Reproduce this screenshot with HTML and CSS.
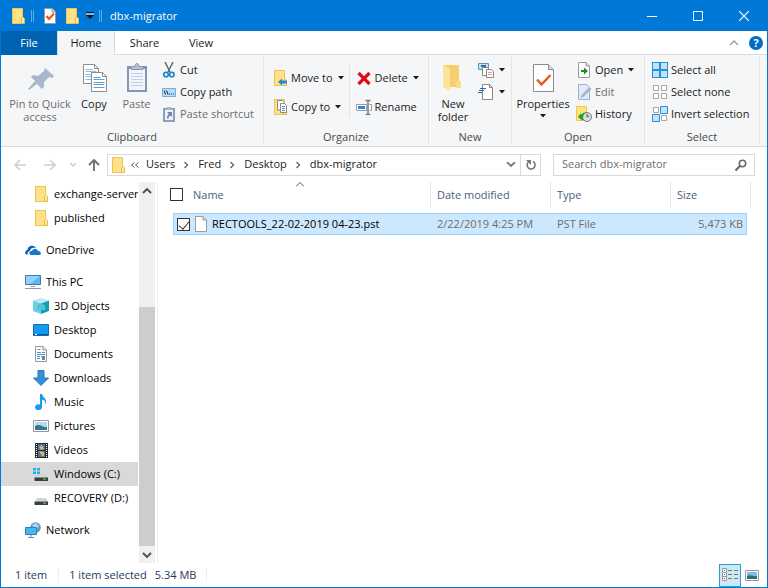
FILE: index.html
```
<!DOCTYPE html>
<html lang="en">
<head>
  <meta charset="UTF-8" />
  <meta name="viewport" content="width=device-width, initial-scale=1.0"/>
  <title>dbx-migrator</title>
  <link rel="stylesheet" href="styles.css">
</head>
<body>
  <!-- Shared icons -->
  <svg class="sprites" aria-hidden="true">
    <symbol id="i-folder" viewBox="0 0 16 16">
      <path d="M2.500 .5h10v10h1v5h-11z" fill="#ffe18a" stroke="#eec44f"/>
      <path d="M11.500 15.500v-5l1-1h1l1 1v5z" fill="#ffe9a6" stroke="#e5b93f"/>
    </symbol>
    <symbol id="i-page" viewBox="0 0 16 16">
      <path d="M2.500 .5h7.500l3.500 3.500v11.500h-11z" fill="#fff" stroke="#9a9a9a"/>
      <path d="M10 .5v3.500h3.500" fill="#ddd" stroke="#9a9a9a"/>
    </symbol>
    <symbol id="i-caret" viewBox="0 0 6 4"><path d="M0 0h6l-3 3.500z" fill="#1b1b1b"/></symbol>
    <symbol id="i-drive" viewBox="0 0 16 16">
      <path d="M4 8h9l2 3.500h-13z" fill="#d2d4d6"/>
      <path d="M1.500 11.500h13.500v3.500h-13.500z" fill="#3b3f41"/>
      <path d="M10.500 12.500h2v1.500h-2z" fill="#3ee43a"/>
    </symbol>
  </svg>

  <div class="window">
    <!-- Title bar -->
    <header class="titlebar">
      <div class="quick">
        <svg class="icon"><use href="#i-folder"/></svg>
        <span class="grip"></span>
        <button aria-label="Properties"><svg class="icon" viewBox="0 0 16 16"><use href="#i-page"/><path d="M4.500 8l2.500 3 5-5.500" fill="none" stroke="#e8501e" stroke-width="2"/></svg></button>
        <button aria-label="New folder"><svg class="icon"><use href="#i-folder"/></svg></button>
        <button class="customize" aria-label="Customize toolbar"><svg width="8" height="8" viewBox="0 0 8 8"><path d="M0 .5h8" stroke="#111"/><path d="M0 3h8l-4 4z" fill="#111"/><path d="M0 2h8" stroke="#fff"/></svg></button>
        <span class="grip"></span>
      </div>
      <h1>dbx-migrator</h1>
      <div class="controls">
        <button aria-label="Minimize"><svg width="10" height="10"><path d="M0 5.500h10" stroke="#fff"/></svg></button>
        <button aria-label="Maximize"><svg width="10" height="10"><path d="M.5 .5h9v9h-9z" fill="none" stroke="#fff"/></svg></button>
        <button aria-label="Close"><svg width="10" height="10"><path d="M0 0l10 10M10 0l-10 10" stroke="#fff" stroke-width="1.200"/></svg></button>
      </div>
    </header>

    <!-- Ribbon tabs -->
    <nav class="tabs">
      <button class="tab file">File</button>
      <button class="tab active">Home</button>
      <button class="tab">Share</button>
      <button class="tab view-tab">View</button>
      <button class="collapse" aria-label="Collapse ribbon"><svg width="8" height="6"><path d="M0 5l4-4 4 4" fill="none" stroke="#999" stroke-width="1.300"/></svg></button>
      <button class="help" aria-label="Help">?</button>
    </nav>

    <!-- Ribbon -->
    <div class="ribbon">
      <section class="group clipboard">
        <div class="tools">
          <button class="big pin" disabled>
            <svg width="32" height="32" viewBox="0 0 32 32"><path d="M21 6l9 8-2 2-3-1-5 5v5l-2 2-5-5-8 6-1-1 7-8-4-4 2-2 5 1 6-5z" fill="#a9b7cd"/></svg>
            Pin to Quick access
          </button>
          <button class="big copy">
            <svg width="32" height="32" viewBox="0 0 32 32">
              <path d="M5.500 2.500h11l4 4v15h-15z" fill="#fff" stroke="#8c8c8c"/><path d="M16.500 2.500v4h4" fill="none" stroke="#8c8c8c"/>
              <path d="M7.500 7.500h7M7.500 9.500h11M7.500 12.500h11M7.500 14.500h11M7.500 17.500h11" stroke="#8dbbea"/>
              <path d="M13.500 10.500h11l4 4v15h-15z" fill="#fff" stroke="#8c8c8c"/><path d="M24.500 10.500v4h4" fill="none" stroke="#8c8c8c"/>
              <path d="M15.500 15.500h7M15.500 17.500h11M15.500 20.500h11M15.500 22.500h11M15.500 25.500h11" stroke="#5e9fe0"/>
            </svg>
            Copy
          </button>
          <button class="big paste" disabled>
            <svg width="32" height="32" viewBox="0 0 32 32">
              <path d="M6 4h20v26h-20z" fill="#8396b8"/><path d="M8 7h16v21h-16z" fill="#f1f5fb"/>
              <path d="M10 11.500h12M10 14.500h12M10 17.500h12M10 20.500h12M10 23.500h12" stroke="#c5d0e2"/>
              <path d="M10 7.500v-3h4c0-4 4-4 4 0h4v3z" fill="#b5bfce" stroke="#8796ad"/>
            </svg>
            Paste
          </button>
          <div class="stack">
            <button class="small"><svg class="icon" viewBox="0 0 16 16"><path d="M4 0l5 10M12 0l-5 10" stroke="#5c6b78" stroke-width="1.500" fill="none"/><circle cx="5" cy="12.500" r="2.300" fill="none" stroke="#1583cb" stroke-width="1.600"/><circle cx="10.800" cy="12.500" r="2.300" fill="none" stroke="#1583cb" stroke-width="1.600"/></svg>Cut</button>
            <button class="small"><svg class="icon" viewBox="0 0 16 16"><path d="M1.500 4.500h13v8h-13z" fill="#b5e0fb" stroke="#79afd1"/><path d="M3 6.500l1.500 4M5.500 6.500l1.500 4" stroke="#123"/><path d="M8 10h1M10 10h1M12 10h1" stroke="#123"/></svg>Copy path</button>
            <button class="small" disabled><svg class="icon" viewBox="0 0 16 16"><path d="M2 2h12v14h-12z" fill="#8fa0bd"/><path d="M4 4h8v10h-8z" fill="#edf2f9"/><path d="M5.500 1h5v3h-5z" fill="#aab7cc"/><path d="M6 6h5v5l-1.500-1.500c-1.500 .5-2 1.500-2 3h-1.500c0-2.500 .5-3.500 2-4.500z" fill="#6c82a9"/></svg>Paste shortcut</button>
          </div>
        </div>
        <h2>Clipboard</h2>
      </section>

      <section class="group organize">
        <div class="tools">
          <div class="stack wide">
            <button class="small"><svg class="icon" viewBox="0 0 16 16"><use href="#i-folder"/><path d="M6 12l4-3.500v2h5v3h-5v2z" fill="#2a86d8"/></svg>Move to<svg class="caret"><use href="#i-caret"/></svg></button>
            <button class="small"><svg class="icon" viewBox="0 0 16 16"><use href="#i-folder"/><path d="M5.500 1.500h5l2 2v7.500h-7z" fill="#fff" stroke="#888"/><path d="M8.500 4.500h4l2 2v7h-6z" fill="#fff" stroke="#888"/><path d="M10 7.500h3M10 9.500h3M10 11.500h3" stroke="#4b94dd"/></svg>Copy to<svg class="caret"><use href="#i-caret"/></svg></button>
          </div>
          <div class="stack wide split">
            <button class="small"><svg class="icon" viewBox="0 0 16 16"><path d="M2.500 3l11 11M13.500 3l-11 11" stroke="#d8111b" stroke-width="3.200"/></svg>Delete<svg class="caret"><use href="#i-caret"/></svg></button>
            <button class="small"><svg class="icon" viewBox="0 0 16 16"><path d="M.5 5.500h10v6h-10zM13.500 5.500h2v6h-2" fill="#fff" stroke="#9a9a9a"/><path d="M2 7h7v3h-7z" fill="#2a86d8"/><path d="M9.500 1.500h5M9.500 15.500h5M12 1.500v14" stroke="#707c88" stroke-width="1.500" fill="none"/></svg>Rename</button>
          </div>
        </div>
        <h2>Organize</h2>
      </section>

      <section class="group new">
        <div class="tools">
          <button class="big newfolder">
            <svg width="32" height="32" viewBox="0 0 32 32"><path d="M6 3h16v22h-16z" fill="#f5d06d"/><path d="M19 19h5v7h-5z" fill="#f9dc89"/><path d="M6 3l7 4v22l-7-4z" fill="#fce49d"/></svg>
            New folder
          </button>
          <div class="stack">
            <button class="small" aria-label="New item"><svg class="icon" viewBox="0 0 16 16"><path d="M.5 1.500h10v6h-10z" fill="#bfe2f8" stroke="#5f93b5"/><path d="M3 4h5" stroke="#30729c" stroke-width="2"/><path d="M4.500 5.500h6v8h-6z" fill="#fff" stroke="#888"/><path d="M8.500 7.500h5l2 2v6h-7z" fill="#fff" stroke="#888"/><path d="M10 10.500h4M10 12.500h4" stroke="#df9b9b"/></svg><svg class="caret"><use href="#i-caret"/></svg></button>
            <button class="small" aria-label="Easy access"><svg class="icon" viewBox="0 0 16 16"><path d="M4.500 .5h7l3 3v12h-10z" fill="#fff" stroke="#888"/><path d="M11.500 .5v3h3" fill="none" stroke="#888"/><path d="M2 4.500h6M1 6.500h5M0 8.500h4" stroke="#1c6db4"/></svg><svg class="caret"><use href="#i-caret"/></svg></button>
          </div>
        </div>
        <h2>New</h2>
      </section>

      <section class="group open">
        <div class="tools">
          <button class="big properties">
            <svg width="32" height="32" viewBox="0 0 32 32"><path d="M6.500 2.500h15l5 5v22h-20z" fill="#fff" stroke="#8c8c8c"/><path d="M21.500 2.500v5h5" fill="#ddd" stroke="#8c8c8c"/><path d="M10 17.500l4.500 5 9-9.500" fill="none" stroke="#f0571e" stroke-width="2.500"/></svg>
            Properties
            <svg class="caret"><use href="#i-caret"/></svg>
          </button>
          <div class="stack">
            <button class="small"><svg class="icon" viewBox="0 0 16 16"><use href="#i-page"/><path d="M5 8h3V5.500L12 9l-4 3.500V10H5z" fill="#17901d"/></svg>Open<svg class="caret"><use href="#i-caret"/></svg></button>
            <button class="small" disabled><svg class="icon" viewBox="0 0 16 16"><path d="M2.500 .5h8l3 3v12h-11z" fill="#e1eaf8" stroke="#9db0d0"/><path d="M4.500 14l1-3 8-8 2 2-8 8z" fill="#a4b5d2"/></svg>Edit</button>
            <button class="small"><svg class="icon" viewBox="0 0 16 16"><path d="M.5 .5h10v14h-10z" fill="#ffe17b" stroke="#ecc755"/><circle cx="11" cy="11" r="4.500" fill="#d9dde0" stroke="#777"/><path d="M11 8v3l2-1" stroke="#555" fill="none"/><path d="M2 11l3-4v2c2-3 5-3 6-2-3 0-4 2-4 5v3z" fill="#18a52b"/></svg>History</button>
          </div>
        </div>
        <h2>Open</h2>
      </section>

      <section class="group select">
        <div class="tools">
          <div class="stack">
            <button class="small"><svg class="icon" viewBox="0 0 16 16"><path d="M0 0h16v16h-16z" fill="#2a8fd9"/><path d="M1 1h6v6h-6zM9 1h6v6h-6zM1 9h6v6h-6zM9 9h6v6h-6z" fill="#bfe4fb"/></svg>Select all</button>
            <button class="small"><svg class="icon" viewBox="0 0 16 16"><path d="M1.500 1.500h5v5h-5zM9.500 1.500h5v5h-5zM1.500 9.500h5v5h-5zM9.500 9.500h5v5h-5z" fill="#fff" stroke="#a5a5a5"/></svg>Select none</button>
            <button class="small"><svg class="icon" viewBox="0 0 16 16"><path d="M1.500 1.500h5v5h-5zM9.500 9.500h5v5h-5z" fill="#fff" stroke="#a5a5a5"/><path d="M8.500 .5h7v7h-7zM.5 8.500h7v7h-7z" fill="#bfe4fb" stroke="#2a8fd9"/></svg>Invert selection</button>
          </div>
        </div>
        <h2>Select</h2>
      </section>
    </div>

    <!-- Navigation bar -->
    <div class="navbar">
      <button class="nav" aria-label="Back" disabled><svg width="12" height="12" viewBox="0 0 12 12"><path d="M12 6h-11M6 1l-5 5 5 5" fill="none" stroke="#d0d0d0" stroke-width="1.600"/></svg></button>
      <button class="nav forward" aria-label="Forward" disabled><svg width="12" height="12" viewBox="0 0 12 12"><path d="M0 6h11M6 1l5 5-5 5" fill="none" stroke="#d0d0d0" stroke-width="1.600"/></svg></button>
      <button class="nav recent" aria-label="Recent locations" disabled><svg width="6" height="4"><path d="M0 0l3 3 3-3" fill="none" stroke="#ccc" stroke-width="1.500"/></svg></button>
      <button class="nav up" aria-label="Up"><svg width="12" height="12" viewBox="0 0 12 12"><path d="M6 12v-11M1 6l5-5 5 5" fill="none" stroke="#707070" stroke-width="1.900"/></svg></button>
      <div class="address">
        <svg class="icon"><use href="#i-folder"/></svg>
        <svg class="more" width="8" height="6"><path d="M3.500 .5l-3 2.500 3 2.500M7.500 .5l-3 2.500 3 2.500" fill="none" stroke="#555"/></svg>
        <a href="#">Users</a>
        <svg class="sep" width="5" height="8"><path d="M.5 1l3 3-3 3" fill="none" stroke="#666" stroke-width="1.400"/></svg>
        <a href="#">Fred</a>
        <svg class="sep" width="5" height="8"><path d="M.5 1l3 3-3 3" fill="none" stroke="#666" stroke-width="1.400"/></svg>
        <a href="#">Desktop</a>
        <svg class="sep" width="5" height="8"><path d="M.5 1l3 3-3 3" fill="none" stroke="#666" stroke-width="1.400"/></svg>
        <a href="#">dbx-migrator</a>
        <button class="history" aria-label="Previous locations"><svg width="10" height="6"><path d="M1 0l4 4 4-4" fill="none" stroke="#777" stroke-width="1.800"/></svg></button>
        <button class="refresh" aria-label="Refresh"><svg width="12" height="12" viewBox="0 0 12 12"><path d="M8 2.500a4 4 0 1 1-4.500 .5" fill="none" stroke="#777" stroke-width="1.600"/><path d="M1 1h5v5z" fill="#777"/></svg></button>
      </div>
      <div class="search">
        <input type="search" aria-label="Search" placeholder="Search dbx-migrator">
        <svg width="12" height="12" viewBox="0 0 12 12"><circle cx="7.500" cy="4.500" r="3.200" fill="none" stroke="#666" stroke-width="1.500"/><path d="M5 7l-4.500 4.500" stroke="#666" stroke-width="2"/></svg>
      </div>
    </div>

    <!-- Folder tree and file list -->
    <div class="main">
      <nav class="tree">
        <a href="#" class="node child"><svg class="icon"><use href="#i-folder"/></svg>exchange-server</a>
        <a href="#" class="node child"><svg class="icon"><use href="#i-folder"/></svg>published</a>
        <a href="#" class="node root"><svg class="icon" viewBox="0 0 16 16"><path d="M1 12.500c-2-2 0-4.500 1.500-4.500 0-4 6-6 8.500-2-4-1-6 1-6 3-2 .5-3 2-2 3.500z" fill="#0b5fb8"/><path d="M5.500 13c-2.500-2-.5-4.500 1.500-4 1-3 5-3 6 0 3 0 4 3 1.500 4z" fill="#1479d3"/></svg>OneDrive</a>
        <a href="#" class="node root"><svg class="icon" viewBox="0 0 16 16"><path d="M.5 1.500h15v9h-15z" fill="#59b7f3" stroke="#467b9f"/><path d="M1 2h14l-10 8h-4z" fill="#94d4fa"/><path d="M6 12.500h4M0 14.500h16" stroke="#849fb3"/></svg>This PC</a>
        <a href="#" class="node child"><svg class="icon" viewBox="0 0 16 16"><path d="M0 2.500l8-2.500 8 2.500-8 3z" fill="#b9edf5"/><path d="M0 2.500l8 3v10.500l-8-3z" fill="#6bd0df"/><path d="M16 2.500l-8 3v10.500l8-3z" fill="#179eb4"/><path d="M4 7l4-1.500 4 1.500v5h-8z" fill="#56c2d2"/></svg>3D Objects</a>
        <a href="#" class="node child"><svg class="icon" viewBox="0 0 16 16"><path d="M.5 2.500h15v11h-15z" fill="#159af0" stroke="#136bb0"/><path d="M1 12.500h14" stroke="#0a5797"/><path d="M2 12.500h2" stroke="#fff"/></svg>Desktop</a>
        <a href="#" class="node child"><svg class="icon" viewBox="0 0 16 16"><use href="#i-page"/><path d="M4.500 3.500h3M4 6.500h4M9 6.500h3M4 8.500h8M4 10.500h3M8 10.500h4M4 12.500h3" stroke="#4a8fc6"/><path d="M9 11h3v3h-3z" fill="#6d8794"/></svg>Documents</a>
        <a href="#" class="node child"><svg class="icon" viewBox="0 0 16 16"><path d="M5 .5h6v7.500h4.500l-7.500 7.500-7.500-7.500h4.500z" fill="#348edb" stroke="#2875b8"/></svg>Downloads</a>
        <a href="#" class="node child"><svg class="icon" viewBox="0 0 16 16"><path d="M7 0h2c0 3 5 4 4 9-.5 1-1 1-1 1 1-3-1-4-3-4.500v7.500a3.500 3 0 1 1-2-2.500z" fill="#149bef"/></svg>Music</a>
        <a href="#" class="node child"><svg class="icon" viewBox="0 0 16 16"><path d="M.5 2.500h15v11h-15z" fill="#fff" stroke="#999"/><path d="M2 4h12v8h-12z" fill="#b4dcf4"/><path d="M2 8c5-3 7 2 12 1v3h-12z" fill="#3b766c"/><path d="M2 10h12v2h-12z" fill="#2b75ac"/></svg>Pictures</a>
        <a href="#" class="node child"><svg class="icon" viewBox="0 0 16 16"><path d="M2 1h13v15h-13z" fill="#2b2b2b"/><path d="M5 2h7v6h-7z" fill="#4873b5"/><path d="M5 9h7v6h-7z" fill="#4873b5"/><path d="M6 5l3-2 2 4-3 1zM6 9l5 1v4h-2z" fill="#e8b64f"/><path d="M3.500 2v14M13.500 2v14" stroke="#fff" stroke-dasharray="1 1"/></svg>Videos</a>
        <a href="#" class="node child current"><svg class="icon" viewBox="0 0 16 16"><use href="#i-drive"/><path d="M0 2h3v2.500h-3zM4 2h3v2.500h-3zM0 5.500h3v2.500h-3zM4 5.500h3v2.500h-3z" fill="#17b5f0"/></svg>Windows (C:)</a>
        <a href="#" class="node child"><svg class="icon"><use href="#i-drive"/></svg>RECOVERY (D:)</a>
        <a href="#" class="node root"><svg class="icon" viewBox="0 0 16 16"><circle cx="10.500" cy="5.500" r="5.300" fill="#5f9dbe"/><path d="M7 3l4-2 3 3-3 4z" fill="#b0d8e8"/><path d="M.5 5.500h11v7h-11z" fill="#4eb3f2" stroke="#2d7fb5"/><path d="M6 13v2M3 15.500h6" stroke="#6f8ea3"/></svg>Network</a>
      </nav>
      <div class="scrollbar">
        <button aria-label="Scroll up"><svg width="10" height="6"><path d="M1 5l4-4 4 4" fill="none" stroke="#505050" stroke-width="1.900"/></svg></button>
        <div class="track"></div>
        <div class="thumb"></div>
        <button aria-label="Scroll down"><svg width="10" height="6"><path d="M1 1l4 4 4-4" fill="none" stroke="#505050" stroke-width="1.900"/></svg></button>
      </div>
      <div class="files">
        <table>
          <thead>
            <tr>
              <th class="pick"><input type="checkbox" aria-label="Select all items"></th>
              <th class="name">Name<svg class="sort" width="8" height="5"><path d="M0 4.500l4-4 4 4" fill="none" stroke="#555"/></svg></th>
              <th class="date">Date modified</th>
              <th class="type">Type</th>
              <th class="size">Size</th>
            </tr>
          </thead>
          <tbody>
            <tr>
              <td class="pick"><input type="checkbox" aria-label="Select RECTOOLS_22-02-2019 04-23.pst" checked></td>
              <td class="name"><span class="entry"><svg class="icon"><use href="#i-page"/></svg>RECTOOLS_22-02-2019 04-23.pst</span></td>
              <td>2/22/2019 4:25 PM</td>
              <td>PST File</td>
              <td class="size">5,473 KB</td>
            </tr>
          </tbody>
        </table>
      </div>
    </div>

    <!-- Status bar -->
    <footer class="status">
      <span class="count">1 item</span>
      <span class="selected">1 item selected</span>
      <span class="total">5.34 MB</span>
      <button class="view on" aria-label="Details view"><svg width="16" height="14" viewBox="0 0 16 14"><path d="M.5 .5h4v4h-4zM.5 4.500h4v4h-4zM.5 8.500h4v4h-4z" fill="#fff" stroke="#999"/><path d="M2 2.500h1M2 6.500h1" stroke="#26c"/><path d="M2 10.500h1" stroke="#c22"/><path d="M6 2.500h4M12 2.500h4M6 6.500h4M12 6.500h4M6 10.500h4M12 10.500h4" stroke="#777"/></svg></button>
      <button class="view" aria-label="Large icons view"><svg width="14" height="11" viewBox="0 0 14 11"><path d="M.5 .5h13v10h-13z" fill="#fff" stroke="#999"/><path d="M2 2h10v7h-10z" fill="#7fbcec"/><path d="M2 6c4-2 6 1 10 0v3h-10z" fill="#33705a"/><path d="M2 8h10v1h-10z" fill="#2563ad"/></svg></button>
    </footer>
  </div>
</body>
</html>
```

FILE: styles.css
```
* {
  box-sizing: border-box;
}

body {
  margin: 0;
  font-family: "Open Sans", "Noto Sans", sans-serif;
  font-size: 11px;
  line-height: 14px;
  color: #1b1b1b;
}

button, input {
  font: inherit;
  color: inherit;
  margin: 0;
  padding: 0;
  border: 0;
  background: none;
}

button {
  display: flex;
  align-items: center;
  white-space: nowrap;
}

a {
  color: inherit;
  text-decoration: none;
}

h1, h2 {
  margin: 0;
  font-size: inherit;
  font-weight: normal;
}

svg {
  flex: none;
  display: block;
}

.sprites {
  position: absolute;
  width: 0;
  height: 0;
}

.icon {
  width: 16px;
  height: 16px;
}

.caret {
  width: 6px;
  height: 4px;
}

.window {
  display: flex;
  flex-direction: column;
  height: 100vh;
  border: 1px solid #0078d7;
  border-top: 0;
  background: #fff;
}

/* Title bar */
.titlebar {
  display: flex;
  align-items: center;
  height: 31px;
  background: #0078d7;
  color: #fff;
}

.quick {
  display: flex;
  align-items: center;
  padding-left: 9px;
}

.grip {
  width: 3px;
  height: 12px;
  margin: 0 8px 0 5px;
  border: solid #62abe5;
  border-width: 0 1px;
}

.quick button + button {
  margin-left: 6px;
}

.controls {
  display: flex;
  margin-left: auto;
}

.controls button {
  justify-content: center;
  width: 46px;
  height: 31px;
}

/* Tabs */
.tabs {
  display: flex;
  align-items: center;
  height: 24px;
  border-bottom: 1px solid #dadbdc;
}

.tab {
  justify-content: center;
  width: 59px;
  height: 24px;
  margin-bottom: -1px;
}

.tab.file {
  width: 56px;
  background: #0063b1;
  color: #fff;
}

.tab.active {
  width: 58px;
  background: #f5f6f7;
  border: 1px solid #dadbdc;
  border-width: 0 1px;
}

.tab.view-tab {
  width: 54px;
}

.collapse {
  margin-left: auto;
}

.help {
  justify-content: center;
  width: 14px;
  height: 14px;
  margin: 0 4px 0 11px;
  border-radius: 50%;
  background: #006cc4;
  color: #fff;
  font-weight: bold;
}

/* Ribbon */
.ribbon {
  display: flex;
  height: 92px;
  padding: 2px 0;
  background: #f5f6f7;
  border-bottom: 1px solid #dadbdc;
}

.group {
  display: flex;
  flex-direction: column;
  justify-content: space-between;
  flex: none;
  border-right: 1px solid #e2e3e4;
}

.group h2 {
  height: 14px;
  text-align: center;
  color: #4a4a4a;
}

.clipboard { width: 263px; }
.organize { width: 165px; }
.new { width: 83px; }
.open { width: 133px; }
.select { width: 115px; }

.tools {
  display: flex;
}

.big {
  flex-direction: column;
  padding-top: 5px;
  line-height: 13px;
  white-space: normal;
}

.big svg:first-child {
  margin-bottom: 3px;
}

.big .caret {
  margin-top: 4px;
}

.pin { width: 64px; margin-left: 7px; }
.copy { width: 44px; }
.paste { width: 41px; }
.newfolder { width: 40px; margin-left: 4px; }
.properties { width: 62px; }

button:disabled {
  color: #6d6d6d;
}

.stack {
  display: flex;
  flex-direction: column;
  padding: 2px 0 0 4px;
}

.small {
  height: 22px;
  gap: 3px;
}

.small .caret {
  margin-left: 2px;
}

.wide {
  gap: 7px;
  padding: 10px 0 0 8px;
}

.split {
  margin-left: 5px;
  padding-left: 7px;
  background: linear-gradient(#e2e3e4, #e2e3e4) left bottom / 1px calc(100% - 7px) no-repeat;
}

.new .stack {
  padding-left: 5px;
}

.open .stack {
  padding-left: 2px;
}

.select .stack {
  padding-left: 7px;
}

/* Navigation bar */
.navbar {
  display: flex;
  align-items: center;
  height: 35px;
  padding: 0 12px 0 13px;
}

.nav {
  justify-content: center;
  width: 12px;
  margin-right: 18px;
}

.nav.forward {
  margin-right: 14px;
}

.nav.recent {
  width: 6px;
  margin-right: 12px;
}

.nav.up {
  margin-right: 7px;
}

.address {
  display: flex;
  align-items: center;
  flex: 1;
  height: 22px;
  padding-left: 2px;
  border: 1px solid #d9d9d9;
}

.address a {
  padding-bottom: 2px;
}

.more {
  margin: 0 7px 0 5px;
}

.sep {
  margin: 0 9px;
}

.history {
  margin: 0 4px 0 auto;
}

.refresh {
  justify-content: center;
  width: 20px;
  height: 20px;
  border-left: 1px solid #d9d9d9;
}

.search {
  display: flex;
  align-items: center;
  width: 202px;
  height: 22px;
  margin-left: 12px;
  padding: 0 7px 0 8px;
  border: 1px solid #d9d9d9;
}

.search input {
  flex: 1;
  min-width: 0;
  padding-bottom: 2px;
  outline: 0;
}

.search input::placeholder {
  color: #6d6d6d;
}

/* Main area */
.main {
  display: flex;
  flex: 1;
  min-height: 0;
}

.tree {
  width: 137px;
  margin-right: 1px;
  overflow: hidden;
  color: #000;
}

.node {
  display: flex;
  align-items: center;
  gap: 5px;
  height: 24px;
  white-space: nowrap;
}

.child {
  padding-left: 32px;
}

.root {
  margin-top: 8px;
  padding-left: 24px;
}

.current {
  background: #d9d9d9;
}

.scrollbar {
  display: flex;
  flex-direction: column;
  width: 16px;
  margin-right: 2px;
  background: #f0f0f0;
}

.scrollbar button {
  justify-content: center;
  height: 17px;
}

.track {
  flex: 5;
}

.thumb {
  flex: 11;
  background: #cdcdcd;
}

.files {
  flex: 1;
  padding-left: 12px;
  border-left: 1px solid #ededed;
}

table {
  width: 581px;
  table-layout: fixed;
  border-spacing: 0;
}

th, td {
  height: 25px;
  padding: 0 6px;
  font-weight: normal;
  text-align: left;
}

th {
  border-right: 1px solid #e5e5e5;
  color: #4c607a;
}

th.pick {
  width: 23px;
  padding: 0;
  border: 0;
}

th.name {
  position: relative;
  width: 238px;
  padding-left: 0;
}

th.date, th.type { width: 120px; }
th.size { width: 80px; }

.sort {
  position: absolute;
  top: 0;
  left: 103px;
}

tbody::before {
  content: "";
  display: table-row;
  height: 6px;
}

td {
  height: 22px;
  border: solid #99d1ff;
  border-width: 1px 0;
  background: #cce8ff;
  color: #6d6d6d;
}

td.pick {
  padding: 0 0 0 4px;
  border: 0;
  border-left: 3px solid #fff;
  box-shadow: inset 1px 1px #99d1ff, inset 0 -1px #99d1ff;
}

td.name {
  padding-left: 0;
  color: #000;
}

td.size {
  padding: 0 4px;
  border: 0;
  border-right: 4px solid #fff;
  box-shadow: inset -1px 1px #99d1ff, inset 0 -1px #99d1ff;
  text-align: right;
}

.entry {
  display: flex;
  align-items: center;
  gap: 3px;
}

input[type="checkbox"] {
  appearance: none;
  display: block;
  width: 13px;
  height: 13px;
  border: 1px solid #333;
  background: #fff;
}

input[type="checkbox"]:checked::before {
  content: "";
  display: block;
  width: 5px;
  height: 9px;
  margin-left: 3px;
  border: solid #333;
  border-width: 0 1px 1px 0;
  transform: rotate(40deg);
}

/* Status bar */
.status {
  display: flex;
  align-items: center;
  height: 24px;
  padding: 0 4px 0 14px;
  color: #1e395b;
}

.count {
  padding-right: 11px;
  border-right: 1px solid #ededed;
}

.selected {
  padding-left: 10px;
}

.total {
  margin: 0 auto 0 8px;
  padding-right: 10px;
  border-right: 1px solid #ededed;
}

.view {
  justify-content: center;
  width: 22px;
  height: 23px;
}

.view.on {
  border: 1px solid #26a0da;
  background: #cbe8f6;
}
```
